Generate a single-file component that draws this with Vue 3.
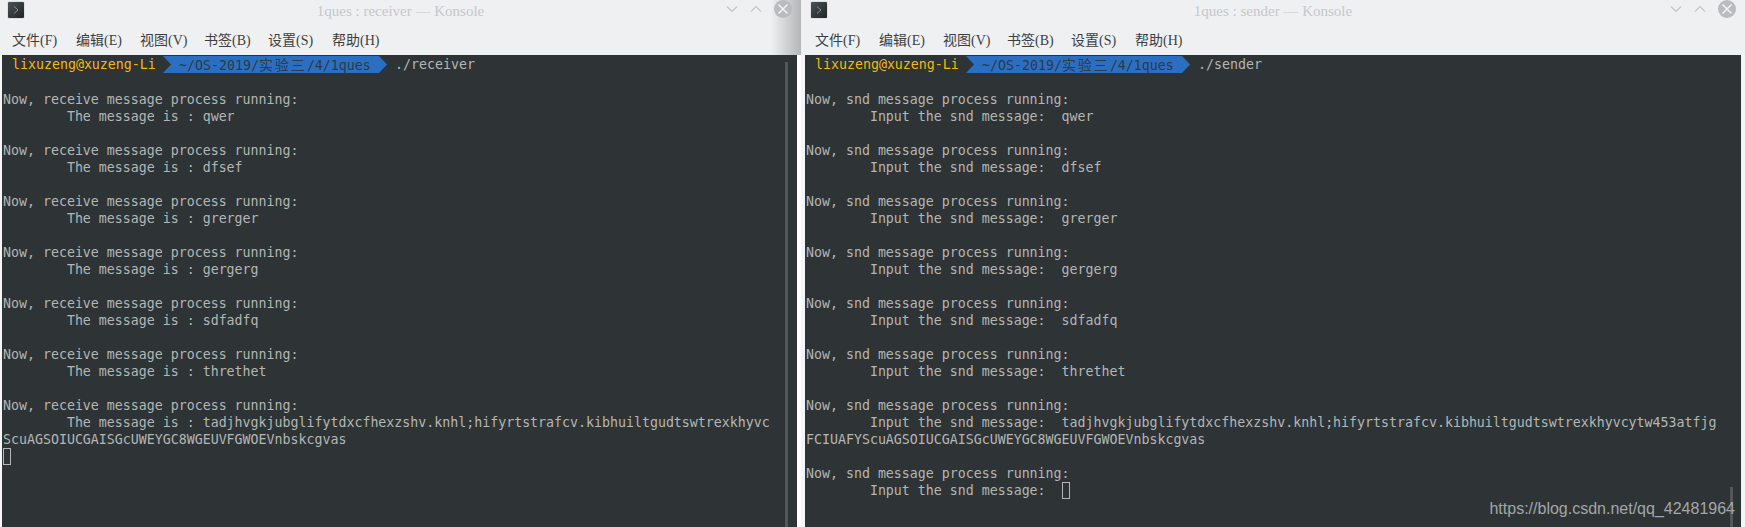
<script setup>
const menus = ['文件(F)', '编辑(E)', '视图(V)', '书签(B)', '设置(S)', '帮助(H)']
const words = ['qwer', 'dfsef', 'grerger', 'gergerg', 'sdfadfq', 'threthet']
const tail = 'tadjhvgkjubglifytdxcfhexzshv.knhl;hifyrtstrafcv.kibhuiltgudtswtrexkhyv'

const windows = [
  {
    key: 'receiver',
    title: '1ques : receiver — Konsole',
    command: './receiver',
    userWidth: 'user-left',
    scroll: 'scroll-long',
    lines: [
      ...words.flatMap((w) => ['', 'Now, receive message process running:', '        The message is : ' + w]),
      '',
      'Now, receive message process running:',
      '        The message is : ' + tail + 'c',
      'ScuAGSOIUCGAISGcUWEYGC8WGEUVFGWOEVnbskcgvas',
    ],
    cursorPrefix: '',
  },
  {
    key: 'sender',
    title: '1ques : sender — Konsole',
    command: './sender',
    userWidth: 'user-right',
    scroll: 'scroll-short',
    lines: [
      ...words.flatMap((w) => ['', 'Now, snd message process running:', '        Input the snd message:  ' + w]),
      '',
      'Now, snd message process running:',
      '        Input the snd message:  ' + tail + 'cytw453atfjg',
      'FCIUAFYScuAGSOIUCGAISGcUWEYGC8WGEUVFGWOEVnbskcgvas',
      '',
      'Now, snd message process running:',
    ],
    cursorPrefix: '        Input the snd message:  ',
  },
]
</script>

<template>
  <div class="desktop">
    <section v-for="win in windows" :key="win.key" class="window" :class="'window-' + win.key">
      <header class="chrome">
        <div class="titlebar">
          <div class="app-icon">
            <svg width="16" height="16" viewBox="0 0 16 16">
              <defs>
                <linearGradient :id="'ic-' + win.key" x1="0" y1="0" x2="1" y2="1">
                  <stop offset="0" stop-color="#4a5356" />
                  <stop offset="1" stop-color="#1f2526" />
                </linearGradient>
              </defs>
              <rect x="0" y="0" width="16" height="16" rx="1" :fill="'url(#ic-' + win.key + ')'" />
              <path d="M6 4.5 L10 8 L6 11.5" fill="none" stroke="#8b9294" stroke-width="1" />
            </svg>
          </div>
          <div class="title">{{ win.title }}</div>
          <div class="controls">
            <svg width="12" height="8" viewBox="0 0 12 8"><path d="M1 1.5 L6 6.5 L11 1.5" fill="none" stroke="#c4c6c9" stroke-width="1.2" /></svg>
            <svg width="12" height="8" viewBox="0 0 12 8"><path d="M1 6.5 L6 1.5 L11 6.5" fill="none" stroke="#c4c6c9" stroke-width="1.2" /></svg>
            <svg width="18" height="18" viewBox="0 0 18 18">
              <circle cx="9" cy="9" r="9" fill="#b9bbbe" />
              <path d="M4.5 4.5 L13.5 13.5 M13.5 4.5 L4.5 13.5" stroke="#f2f3f4" stroke-width="1.5" />
            </svg>
          </div>
        </div>
        <nav class="menubar">
          <span v-for="m in menus" :key="m" class="menu">{{ m }}</span>
        </nav>
      </header>
      <div class="frame">
        <div class="terminal">
          <div class="row prompt">
            <span class="user" :class="win.userWidth">lixuzeng@xuzeng-Li</span>
            <span class="path">~/OS-2019/<span class="cjk">实验三</span>/4/1ques</span>
            <span class="command">{{ win.command }}</span>
          </div>
          <div v-for="(line, i) in win.lines" :key="i" class="row">{{ line }}</div>
          <div class="row">{{ win.cursorPrefix }}<span class="cursor"></span></div>
          <div class="scrollbar" :class="win.scroll"></div>
        </div>
      </div>
    </section>
    <div class="watermark">https://blog.csdn.net/qq_42481964</div>
  </div>
</template>

<style scoped>
.desktop {
  position: relative;
  display: flex;
  width: 1745px;
  height: 527px;
  overflow: hidden;
  background: #eff0f2;
}
.window {
  display: flex;
  flex-direction: column;
  height: 527px;
}
.window-receiver {
  width: 801px;
}
.window-sender {
  width: 944px;
}
.chrome {
  height: 55px;
  flex: none;
  background: #eff0f2;
}
.window-receiver .chrome {
  background: linear-gradient(to right, #eff0f2 calc(100% - 30px), #b4b5b6 100%);
}
.titlebar {
  position: relative;
  display: flex;
  align-items: flex-start;
  justify-content: space-between;
  height: 27px;
}
.app-icon {
  height: 16px;
  margin: 2px 0 0 8px;
  box-shadow: 0 0 1px #9a9c9e;
}
.window-sender .app-icon {
  margin-left: 10px;
}
.title {
  position: absolute;
  left: 0;
  right: 0;
  top: 1px;
  text-align: center;
  font: 15px/20px "Liberation Serif", serif;
  color: #c6c8ca;
}
.controls {
  position: relative;
  display: flex;
  align-items: center;
  gap: 12px;
  height: 18px;
  margin: 0 9px 0 0;
}
.menubar {
  display: grid;
  grid-auto-flow: column;
  grid-auto-columns: 64px;
  justify-content: start;
  padding-left: 12px;
  height: 28px;
  font: 14px/28px "Liberation Serif", "Noto Sans CJK SC", serif;
  color: #3c3f41;
  white-space: nowrap;
}
.window-sender .menubar {
  padding-left: 14px;
}
.frame {
  flex: 1;
  min-height: 0;
  display: flex;
  padding: 0 4px 0 2px;
  background: linear-gradient(to right, #f6f6f7 calc(100% - 4px), #fff calc(100% - 4px));
}
.window-sender .frame {
  padding: 0 4px;
  background: #f4f5f6;
}
.terminal {
  position: relative;
  flex: 1;
  padding-top: 1px;
  background: #2e3436;
  color: #b3b6b4;
  font: 13.28px/17px "DejaVu Sans Mono", monospace;
  font-weight: 500;
  overflow: hidden;
}
.row {
  height: 17px;
  white-space: pre;
  padding-left: 1px;
}
.prompt {
  position: relative;
  display: flex;
  height: 18px;
}
.user {
  padding-left: 9px;
  color: #f2b90f;
  width: 151px;
  flex: none;
}
.user-right {
  width: 151px;
}
.path {
  flex: none;
  width: 224px;
  height: 17px;
  padding: 0 0 0 16px;
  box-sizing: border-box;
  background: #2a6fc2;
  color: #2e3a44;
  clip-path: polygon(0 0, calc(100% - 8px) 0, 100% 50%, calc(100% - 8px) 100%, 0 100%, 8px 50%);
}
.cjk {
  font-family: "Noto Sans CJK SC", sans-serif;
  letter-spacing: 2px;
  font-size: 14px;
  line-height: 17px;
  font-weight: 400;
}
.command {
  margin-left: 8px;
}
.cursor {
  display: inline-block;
  box-sizing: border-box;
  width: 8px;
  height: 17px;
  border: 1px solid #b3b6b4;
  vertical-align: top;
}
.scrollbar {
  position: absolute;
  width: 3px;
  right: 9px;
  bottom: 0;
  background: #52585a;
}
.scroll-long {
  height: 465px;
}
.scroll-short {
  height: 40px;
  right: 8px;
}
.watermark {
  position: absolute;
  right: 10px;
  bottom: 8px;
  font: 16px/20px "Liberation Sans", Arial, sans-serif;
  color: #a3a6a8;
}
</style>
